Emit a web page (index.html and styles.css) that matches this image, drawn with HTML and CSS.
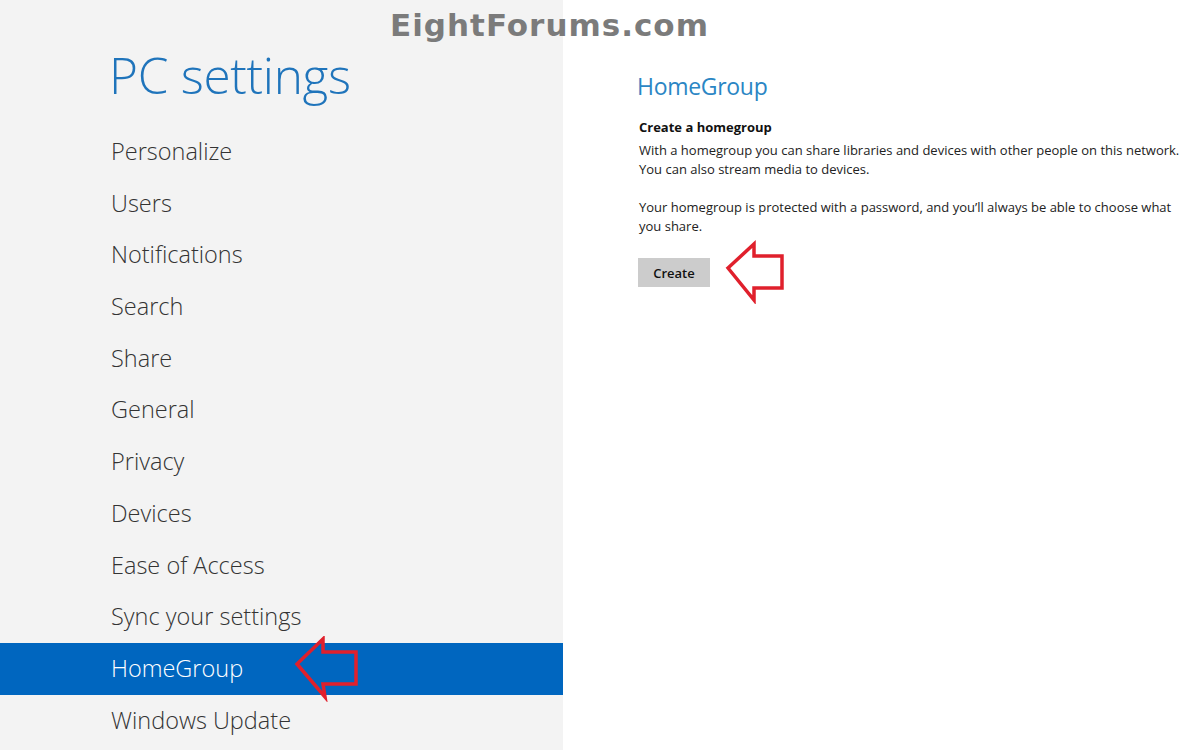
FILE: index.html
```html
<!DOCTYPE html>
<html>
<head>
<meta charset="utf-8">
<link rel="stylesheet" href="styles.css">
</head>
<body>
<div class="page">
  <aside class="sidebar">
    <h1 class="title">PC settings</h1>
    <ul class="menu">
      <li class="item">Personalize</li>
      <li class="item">Users</li>
      <li class="item">Notifications</li>
      <li class="item">Search</li>
      <li class="item">Share</li>
      <li class="item">General</li>
      <li class="item">Privacy</li>
      <li class="item">Devices</li>
      <li class="item">Ease of Access</li>
      <li class="item">Sync your settings</li>
      <li class="item selected">HomeGroup
        <svg class="arrow arrow-side" width="70" height="66" viewBox="0 0 70 66"><path d="M7 28 L33 3 L33 16 L66 16 L66 48 L33 48 L35 61 Z" fill="none" stroke="#e0202c" stroke-width="3.5" stroke-linejoin="miter"/></svg>
      </li>
      <li class="item">Windows Update</li>
    </ul>
  </aside>
  <main class="content">
    <h2 class="heading">HomeGroup</h2>
    <h3 class="subheading">Create a homegroup</h3>
    <p class="text">With a homegroup you can share libraries and devices with other people on this network. You can also stream media to devices.</p>
    <p class="text">Your homegroup is protected with a password, and you’ll always be able to choose what you share.</p>
    <div class="actions">
      <button class="btn">Create</button>
      <svg class="arrow arrow-btn" width="64" height="64" viewBox="0 0 64 64"><path d="M4 28 L30 4 L30 16 L58 16 L58 48 L30 48 L30 60 Z" fill="none" stroke="#e0202c" stroke-width="3.5"/></svg>
    </div>
  </main>
  <div class="watermark">EightForums.com</div>
</div>
</body>
</html>
```
FILE: styles.css
```css
* { box-sizing: border-box; }
html, body { margin: 0; padding: 0; }
body { width: 1187px; height: 750px; overflow: hidden; background: #fff; font-family: "Open Sans", "Noto Sans", sans-serif; }
.page { display: flex; height: 750px; position: relative; }
.sidebar { width: 563px; flex: none; background: #f3f3f3; height: 750px; }
.title { margin: 0; padding: 42px 0 0 109px; font-weight: 300; font-size: 49.5px; line-height: 66px; color: #1f74bb; letter-spacing: -0.3px; }
.menu { list-style: none; margin: 0; padding: 0; margin-top: 18px; }
.item { position: relative; height: 51.7px; line-height: 51.7px; padding-left: 111px; font-size: 23.5px; font-weight: 300; color: #333; letter-spacing: 0; }
.item.selected { background: #0066bf; color: #fff; }
.arrow { position: absolute; }
.arrow-side { left: 290px; top: -7px; }
.content { flex: 1; padding: 66px 0 0 74px; }
.heading { margin: 0; font-weight: 400; font-size: 23px; line-height: 40px; color: #2b86c4; letter-spacing: -0.3px; }
.subheading { margin: 11px 0 0 2px; font-size: 13px; font-weight: 700; line-height: 20px; color: #111; }
.text { margin: 4px 0 0 2px; font-size: 13px; line-height: 19px; color: #222; width: 545px; }
.text + .text { margin-top: 19px; }
.actions { position: relative; margin: 22px 0 0 1px; }
.btn { display: block; width: 72px; height: 29px; border: none; background: #cccccc; font-family: inherit; font-size: 13px; font-weight: 600; color: #111; padding: 0; }
.arrow-btn { left: 86px; top: -18px; }
.watermark { position: absolute; left: 390px; top: 7px; font-family: "DejaVu Sans", sans-serif; font-weight: 700; font-size: 31px; color: #7b7b7b; letter-spacing: 1px; }
```
